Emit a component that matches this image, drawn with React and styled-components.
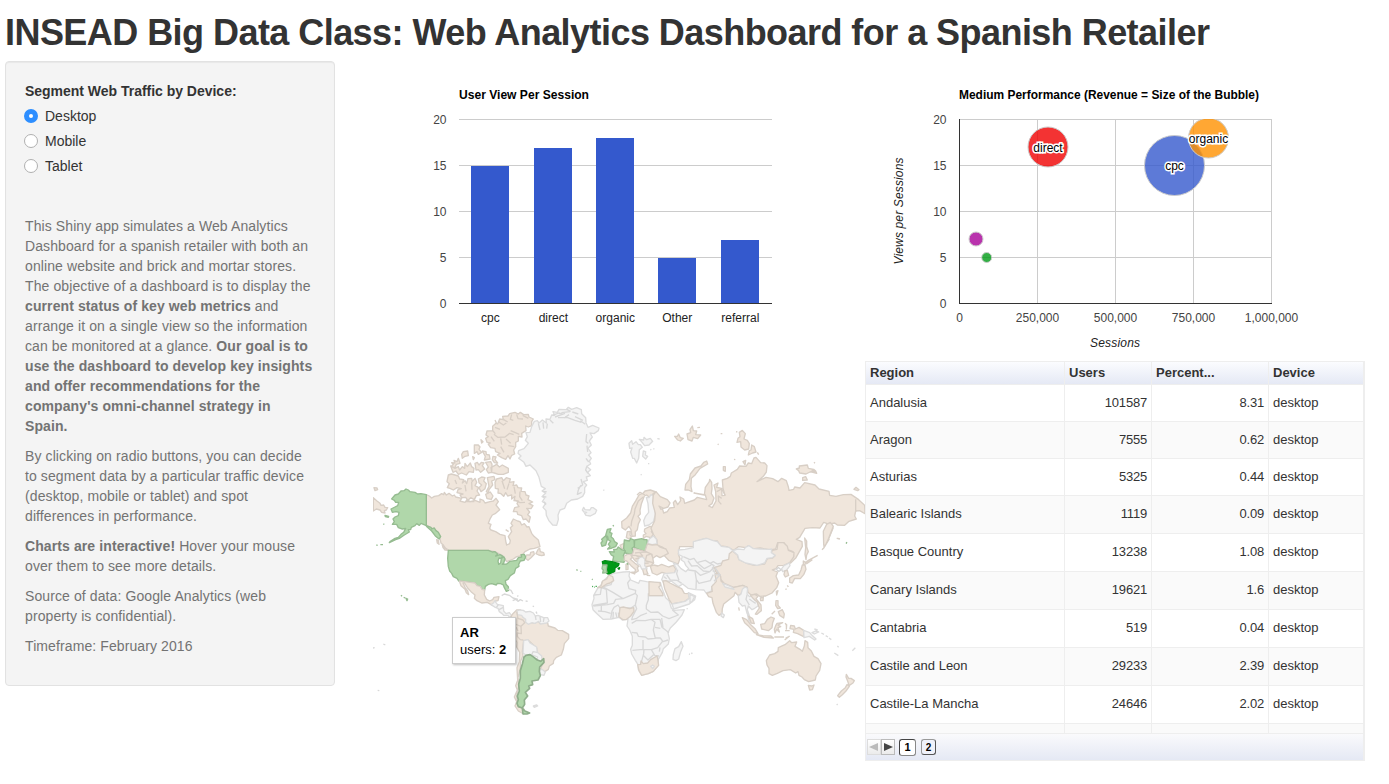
import React from "react";
import styled, { createGlobalStyle, css } from "styled-components";

const GlobalStyle = createGlobalStyle`
  * { box-sizing: border-box; }
  body {
    margin: 0;
    background: #fff;
    color: #333;
    font: 14px/20px "Liberation Sans", Arial, sans-serif;
    overflow: hidden;
  }
`;

const Page = styled.div`
  width: 1389px;
  height: 784px;
  padding: 0 5px;
`;

const Title = styled.h1`
  margin: 0;
  height: 61px;
  padding-top: 13px;
  font-size: 36px;
  line-height: 40px;
  font-weight: 700;
  letter-spacing: -0.55px;
  white-space: nowrap;
`;

const Body = styled.div`
  display: flex;
  align-items: flex-start;
`;

const Sidebar = styled.aside`
  width: 330px;
  height: 625px;
  padding: 19px;
  background: #f4f4f4;
  border: 1px solid #e2e2e2;
  border-radius: 4px;
  box-shadow: inset 0 1px 1px rgba(0, 0, 0, 0.05);
  white-space: nowrap;
`;

const GroupLabel = styled.div`
  font-weight: bold;
  height: 25px;
  letter-spacing: -0.02px;
`;

const RadioRow = styled.label`
  display: flex;
  align-items: center;
  gap: 7px;
  height: 20px;
  margin: 0 0 5px -1px;
`;

const Radio = styled.span`
  width: 14px;
  height: 14px;
  border-radius: 50%;
  border: 1px solid #b0b0b0;
  background: #fff;
  ${(p) =>
    p.$checked &&
    css`
      border: 5px solid #2d8eff;
    `}
`;

const Copy = styled.div`
  margin-top: 40px;
  color: #737373;
  letter-spacing: 0.1px;
`;

const Para = styled.p`
  margin: 0 0 10px;
`;

const Main = styled.main`
  display: grid;
  grid-template-columns: 500px 500px;
  grid-template-rows: 300px 400px;
  margin-left: 30px;
`;

const Chart = styled.svg`
  display: block;
  width: 500px;
  height: 300px;
  font-size: 12px;
  font-family: "Liberation Sans", Arial, sans-serif;
`;

const MapPanel = styled.div`
  position: relative;
  width: 500px;
  height: 400px;
`;

const MapSvg = styled.svg`
  display: block;
  width: 500px;
  height: 400px;
`;

const Tooltip = styled.div`
  position: absolute;
  left: 87px;
  top: 256px;
  width: 64px;
  height: 47px;
  padding: 6px 7px;
  background: #fff;
  border: 1px solid #ccc;
  box-shadow: 1px 1px 2px rgba(0, 0, 0, 0.25);
  color: #000;
  font-size: 13px;
  line-height: 17px;
  white-space: nowrap;
`;

const TablePanel = styled.section`
  width: 500px;
  height: 400px;
  border: 1px solid #eee;
  border-right-width: 2px;
  display: flex;
  flex-direction: column;
  font-size: 13px;
  overflow: hidden;
`;

const Row = styled.div`
  display: grid;
  grid-template-columns: 199px 87px 117px 1fr;
  flex: none;
  height: ${(p) => p.$h}px;
  background: ${(p) => (p.$odd ? "#fafafa" : "#fff")};
  ${(p) =>
    p.$head &&
    css`
      background: linear-gradient(#fbfcff, #e4e8f4);
      font-weight: bold;
    `}
`;

const Cell = styled.div`
  display: flex;
  align-items: center;
  justify-content: ${(p) => (p.$right ? "flex-end" : "flex-start")};
  letter-spacing: ${(p) => (p.$right ? "-0.2px" : "normal")};
  padding: 0 4px ${(p) => (p.$lift ? 2 : 0)}px;
  border-right: 1px solid #eee;
  border-bottom: 1px solid #eee;
  &:last-child { border-right: 0; }
`;

const Pager = styled.footer`
  flex: none;
  height: 27px;
  margin-top: auto;
  background: linear-gradient(#fafafc, #e4e8f4);
  display: flex;
  align-items: center;
  padding: 0 0 1px 1px;
`;

const Arrow = styled.span`
  width: 14px;
  height: 16px;
  border: 1px solid ${(p) => (p.$off ? "#ddd" : "#bbb")};
  background: linear-gradient(#fff, #ebebeb);
  display: flex;
  align-items: center;
  justify-content: center;
`;

const PageButton = styled.span`
  width: ${(p) => (p.$active ? 17 : 15)}px;
  height: ${(p) => (p.$active ? 17 : 16)}px;
  margin-left: ${(p) => (p.$active ? 4 : 5)}px;
  border: 1px solid #777;
  border-color: ${(p) => (p.$active ? "#444 #888 #888 #444" : "#999 #555 #555 #999")};
  border-radius: 3px;
  background: ${(p) => (p.$active ? "#fff" : "#f0f2fa")};
  color: #000;
  font-size: ${(p) => (p.$active ? 11 : 10)}px;
  font-weight: bold;
  line-height: 15px;
  text-align: center;
`;

const bars = [
  ["cpc", 15, 106, 105],
  ["direct", 17, 169, 87],
  ["organic", 18, 231, 77],
  ["Other", 5, 293, 197],
  ["referral", 7, 356, 179],
];
const ticks = [0, 5, 10, 15, 20];
const yOf = (v) => 242.5 - v * 9.2;

function BarChart() {
  return (
    <Chart viewBox="0 0 500 300">
      <text x="94" y="38" fontWeight="bold" textLength="130" lengthAdjust="spacingAndGlyphs">User View Per Session</text>
      {ticks.map((t) => (
        <g key={t}>
          <rect x="94" y={Math.floor(yOf(t))} width="313" height="1" fill="#ccc" />
          <text x="81.5" y={yOf(t) + 4.5} textAnchor="end" fill="#444">{t}</text>
        </g>
      ))}
      {bars.map(([name, v, x, top]) => (
        <g key={name}>
          <rect x={x} y={top} width="38" height={242 - top} fill="#3459cd" />
          <text x={x + 19.3} y="261" textAnchor="middle" fill="#222">{name}</text>
        </g>
      ))}
      <rect x="94" y="242" width="313" height="1" fill="#333" />
    </Chart>
  );
}

const bubbles = [
  ["cpc", 309.5, 104.5, 30, "#3459cd"],
  ["direct", 183, 86, 20, "#f00000"],
  ["organic", 343.5, 77, 20, "#ff9100"],
  ["", 111, 178, 7, "#a80099"],
  ["", 121.7, 196.5, 5, "#009b17"],
];

function BubbleChart() {
  return (
    <Chart viewBox="0 0 500 300">
      <defs>
        <clipPath id="plot"><rect x="94" y="58" width="313" height="185" /></clipPath>
      </defs>
      <text x="94" y="38" fontWeight="bold" textLength="300" lengthAdjust="spacingAndGlyphs">Medium Performance (Revenue = Size of the Bubble)</text>
      {ticks.map((t, i) => (
        <g key={t}>
          <rect x="94" y={Math.floor(yOf(t))} width="313" height="1" fill="#ccc" />
          <rect x={94 + i * 78} y="58" width="1" height="185" fill="#ccc" />
          <text x="81.5" y={yOf(t) + 4.5} textAnchor="end" fill="#444">{t}</text>
          <text x={94.5 + i * 78} y="261" textAnchor="middle" fill="#444">{(i * 250000).toLocaleString("en-US")}</text>
        </g>
      ))}
      <rect x="94" y="242" width="313" height="1" fill="#333" />
      <rect x="94" y="58" width="1" height="185" fill="#333" />
      <g clipPath="url(#plot)">
        {bubbles.map(([n, x, y, r, c]) => (
          <circle key={x} cx={x} cy={y} r={r} fill={c} fillOpacity=".8" stroke="#ccc" />
        ))}
      </g>
      {bubbles.map(([n, x, y]) => (
        <text key={x} x={x} y={y + 4.5} textAnchor="middle" stroke="#fff" strokeWidth="3" paintOrder="stroke">{n}</text>
      ))}
      <text x="250" y="286" textAnchor="middle" fontStyle="italic" fill="#222" textLength="50">Sessions</text>
      <text transform="translate(38 150) rotate(-90)" textAnchor="middle" fontStyle="italic" fill="#222" textLength="107">Views per Sessions</text>
    </Chart>
  );
}

const palette = {
  beige: ["#f0e6dc", "#d8cfc6"],
  grey: ["#f4f4f4", "#dcdcdc"],
  green: ["#b0d7aa", "#96bc91"],
  hover: ["#b0d7aa", "#8fae8b"],
  spain: ["#009a16", "#008a14"],
  line: ["none", "#d8d8d8"],
  tan: ["none", "#d8cfc6"],
  lake: ["#fff", "#d5d5d5"],
};

// Outlines are grouped by region; each group has its own origin, three units to a pixel.
const regions = [
  {
    at: [0, 34],
    shapes: [
      ["beige", "M184,299 193,303 200,309 208,304 221,302 230,296 236,299 238,292 244,300 252,295 262,303 268,300 272,306 290,310 285,318 300,322 306,314 315,320 330,316 345,322 345,312 355,316 360,324 375,320 385,318 393,310 400,320 393,330 404,344 392,355 382,360 376,370 370,385 378,388 374,400 378,405 392,410 405,418 420,422 422,438 425,450 434,446 436,437 430,425 440,410 436,398 443,392 438,385 445,372 458,378 465,380 470,390 478,386 486,396 492,395 500,415 507,424 520,435 525,455 508,460 495,462 480,470 470,482 455,485 445,492 425,500 415,485 410,480 390,470 370,466 250,466 240,458 235,450 228,444 225,432 215,412 200,400 184,390Z"],
      ["green", "M184,299 168,296 158,297 150,292 135,290 130,285 123,282 117,287 108,288 100,297 90,300 80,312 88,316 92,322 101,322 98,332 90,336 78,342 82,352 93,350 102,352 100,362 90,366 84,372 88,380 82,388 95,388 100,398 112,402 122,400 116,412 108,418 100,427 90,430 75,440 73,443 92,434 103,430 118,420 133,411 130,404 137,404 139,397 150,392 155,386 163,391 168,385 184,392 198,397 200,402 208,399 213,407 220,412 227,425 222,432 212,424 200,408 184,394Z"],
      ["green", "M60,361 71,364 70,367 61,365ZM55,387 58,388M46,449 54,449M34,450 38,451"],
      ["beige", "M25,308 36,318 45,325 48,331 56,330 60,337 68,338 64,345 58,347 60,354 50,352 45,345 34,342 25,348ZM27,278 36,279 38,284 30,287Z"],
      ["beige", "M480,488 485,480 495,480 497,472 506,470 508,478 498,488 489,496 484,492ZM513,476 520,462 524,460 526,470 536,473 538,480 530,482 521,480ZM215,434 220,436 222,448 217,444ZM232,450 240,459 251,466 240,465 234,458Z"],
      ["beige", "M390,262 395,252 410,248 415,257 424,248 436,252 433,262 447,260 444,272 455,270 459,278 470,279 468,289 480,290 483,300 492,303 489,314 503,321 492,326 504,332 498,341 485,340 494,351 488,359 496,366 492,382 483,372 475,374 470,362 458,358 456,350 445,350 449,338 462,335 456,326 460,318 447,317 450,304 440,312 440,300 428,303 422,293 416,304 408,296 399,294 400,282 391,280Z"],
      ["beige", "M250,240 259,237 270,240 280,243 284,252 296,254 292,264 300,257 305,266 309,251 320,250 322,259 330,250 335,262 330,272 341,278 336,288 344,300 334,302 328,314 317,308 309,316 302,307 290,308 285,300 294,297 276,293 279,284 289,281 276,278 265,285 255,280 247,278 253,266 246,260Z"],
      ["beige", "M340,252 350,246 360,248 356,258 364,266 360,281 348,290 342,278 350,270 342,263ZM367,248 387,244 390,254 380,258 383,270 372,284 370,294 364,290 372,274ZM362,298 376,291 384,303 379,313 366,311Z"],
      ["beige", "M383,94 393,85 398,87 404,72 415,74 413,64 429,63 434,56 450,52 460,57 466,52 476,59 490,58 492,66 505,72 500,80 500,92 490,96 482,93 483,107 470,115 471,126 460,124 460,138 452,142 452,155 446,165 449,177 440,181 435,192 429,182 422,193 410,188 397,180 405,175 392,170 390,160 377,158 370,148 376,144 366,142 362,130 370,125 363,120 366,108 383,107 390,115 383,106Z"],
      ["beige", "M378,218 395,208 403,216 412,210 430,220 430,232 415,238 400,238 388,234 380,232ZM328,150 340,150 345,156 342,163 350,172 340,178 336,170 328,175ZM352,168 363,170 364,178 373,180 375,192 358,195 361,184ZM258,215 265,208 260,203 270,204 267,196 276,200 280,190 285,205 274,208 270,218ZM290,178 295,170 308,168 310,182 300,184 292,190ZM257,213 270,220 280,215 284,225 292,215 299,220 300,205 307,215 316,204 320,215 327,220 325,232 312,230 304,240 290,234 280,238 273,228 264,232ZM330,205 337,202 342,210 349,202 357,204 352,212 359,222 347,232 340,224 333,225ZM348,134 354,140 350,144ZM362,202 377,200 381,208 380,232 370,234 364,224 370,216ZM323,185 328,188 325,194ZM384,184 393,186 390,194 398,204 388,203 382,194Z"],
      ["tan", "M390,97 405,103M400,80 415,90 424,84M415,73 428,81M440,58 436,73 445,76M455,58 459,71 474,72M473,61 490,70M387,118 398,127 420,126 434,115 446,119M437,107 463,118M423,132 437,145M430,152 448,155M407,130 410,149M378,125 388,139M407,155 417,172M390,75 395,86M411,257 419,281M432,265 426,284M447,275 451,296M465,290 464,305 472,317M450,315 465,323 480,322M270,255 275,267M300,270 303,289M320,260 321,284M302,320 328,320M431,410 422,404"],
    ],
  },
  {
    at: [0, 194],
    shapes: [
      ["green", "M250,-14 370,-14 382,-9 390,-10 398,-3 392,3 405,-1 414,4 408,10 402,9 399,18 401,28 407,24 409,10 417,6 420,12 416,24 412,28 425,27 435,19 455,16 460,8 470,6 468,-1 478,-2 482,6 477,16 466,18 461,28 462,34 452,40 448,54 436,62 429,73 421,77 423,88 430,95 431,106 424,109 418,98 415,90 407,86 397,85 394,90 380,86 370,88 361,94 359,105 351,103 346,94 336,92 330,84 300,80 281,78 276,70 265,65 260,55 254,48 250,35 248,10Z"],
      ["beige", "M283,78 300,80 330,84 336,92 346,94 351,103 359,105 358,120 365,133 374,138 383,134 387,127 402,125 399,137 391,138 388,145 380,150 367,142 350,144 336,137 328,130 330,120 318,110 308,99 298,83 294,84 300,97 308,108 311,119 304,113 300,103 288,92Z"],
      ["grey", "M378,149 386,143 390,137 393,143 397,148 415,152 416,168 423,176 433,173 440,182 435,188 429,181 416,181 410,175 403,170 399,160 391,157Z"],
      ["line", "M400,149 394,158M415,157 402,164M410,122 418,117 433,121 444,129 459,133M443,137 452,133 459,139 466,134 474,138M482,138 488,139M429,102 438,106 444,117M457,122 460,124M503,153 507,155M513,170 516,176M20,280 29,278M55,267 61,270M38,406 43,407M2,282 3,283"],
      ["green", "M108,121 111,124M116,127 121,129M123,130 128,132 126,137Z"],
      ["beige", "M438,184 443,177 455,165 466,165 471,169 474,185 482,193 492,194 488,205 502,203 510,205 518,196 525,206 540,196 548,204 550,213 570,219 578,226 592,227 611,238 611,251 598,266 595,283 589,300 574,307 566,317 565,325 553,333 550,343 538,351 527,341 535,321 527,314 528,303 517,294 515,279 489,255 476,257 472,290 474,302 467,318 466,339 459,368 462,390 455,424 458,443 464,456 477,462 476,477 460,468 450,453 455,440 448,426 457,405 452,392 458,376 456,338 463,320 464,292 455,276 456,262 440,239 436,227 445,216 441,204 447,197Z"],
      ["grey", "M456,168 464,165 475,166 482,171 495,169 505,174 511,183 519,181 536,188 548,188 552,198 545,204 527,207 521,199 510,205 501,203 490,208 482,202 482,193 474,187 470,181 457,179Z"],
      ["line", "M511,183 513,195M525,185 527,201M537,189 535,201"],
      ["grey", "M476,257 489,254 495,264 515,276 517,292 530,303 531,315 526,320 515,314 518,306 505,301 495,299 483,301 474,294Z"],
      ["line", "M500,299 504,290 517,292"],
      ["tan", "M455,170 459,190 474,195 479,203 468,214 458,210 445,205M468,214 469,236 457,234 457,244 466,254 475,255M439,216 454,218 459,228"],
      ["grey", "M524,344 531,343 541,351 537,361 525,358ZM505,453 515,450 518,453 508,457Z"],
      ["hover", "M477,306 483,301 495,299 504,305 517,315 527,319 536,311 537,322 524,336 523,350 526,362 519,375 501,378 503,389 491,393 494,400 481,412 488,423 478,435 479,448 472,459 460,455 456,445 460,434 457,423 463,408 461,388 466,370 466,347 472,327Z"],
      ["hover", "M472,460 480,468 494,474 486,477 474,477Z"],
    ],
  },
  {
    at: [165, 34],
    shapes: [
      ["grey", "M5,95 13,79 22,77 27,84 37,75 49,84 48,72 60,73 65,60 74,61 69,50 82,52 87,43 108,44 115,37 125,43 140,38 154,44 155,56 167,68 168,83 174,97 188,91 207,99 205,107 192,116 180,114 187,126 178,138 184,150 174,160 183,173 176,180 184,190 178,198 182,207 170,214 182,224 173,232 181,242 169,246 172,256 160,260 170,270 164,278 164,293 158,304 143,312 124,315 110,325 104,340 90,345 84,360 85,374 80,391 68,390 56,376 49,361 48,347 39,337 47,325 37,320 44,309 36,305 47,294 36,288 46,281 34,274 27,247 18,227 0,210 -12,214 -18,202 -34,190 -27,183 -36,175 -34,167 -18,161 -5,145 -14,136 -8,125 -12,113 0,112Z"],
      ["line", "M25,85 30,105M39,82 41,101M52,86 50,101M60,75 70,85M68,61 86,54 100,58M75,66 105,55M94,53 120,50M117,59 103,69M127,51 145,57M105,65 135,76 154,82M84,68 115,68M135,65 159,76M110,43 122,49M151,77 166,88M38,290 50,290M39,305 49,306M42,320 48,329M153,252 158,270 143,280M153,270 145,285 142,298 155,292M170,117 168,140 175,145M171,152 173,171M168,190 176,201M170,215 167,225 174,235"],
      ["grey", "M157,345 161,337 165,344 180,345 184,338 190,338 200,346 196,355 181,363 168,361 164,355 170,352 162,351Z"],
      ["grey", "M297,145 305,137 308,148 318,140 325,149 331,149 337,157 328,164 326,190 320,204 313,190 308,190 302,171 306,159 299,160ZM328,133 341,135 342,127 350,134 361,130 368,139 357,150 344,152 337,143ZM340,168 347,170 346,180 353,184 347,192 338,184ZM382,131 389,132M361,163 364,165M370,161 373,162M354,206 358,206M332,238 335,240M220,285 223,286"],
      ["green", "M232,403 243,401 239,412 246,415 243,425 250,431 254,440 262,445 257,455 246,459 233,462 240,454 235,448 242,438 235,435 233,425 227,421ZM227,422 232,432 227,450 216,454 213,444 218,438 215,433ZM249,390 251,394"],
      ["beige", "M275,380 290,369 302,354 307,334 318,316 327,300 340,294 345,288 361,285 378,291 370,295 365,302 357,306 350,300 343,303 334,327 330,346 331,357 324,364 331,374 325,387 322,404 316,410 316,423 306,424 303,404 297,394 286,405 276,398Z"],
      ["tan", "M303,394 305,379 313,356 315,342 325,318 340,306M321,300 330,292 345,300"],
      ["grey", "M349,307 357,308 363,299 370,303 369,322 374,336 376,359 370,380 357,390 344,393 341,377 346,365 356,352 354,326Z"],
      ["beige", "M292,410 301,409 300,420 305,425 297,432 289,427ZM270,451 282,445 283,458 275,462ZM344,402 360,394 369,396 364,410 370,418 362,428 348,424 340,431 340,420 348,416 343,410Z"],
      ["green", "M283,435 298,438 302,431 312,435 314,454 306,460 310,471 304,478 286,474 281,460Z"],
      ["green", "M314,435 335,431 342,434 351,434 352,446 347,466 336,467 313,458Z"],
      ["green", "M238,470 253,471 251,463 260,463 265,456 275,464 286,468 280,482 285,494 282,502 263,500 248,498 251,484 244,480Z"],
      ["beige", "M370,300 378,290 391,305 412,314 420,324 414,336 401,340 387,333 393,343 397,340 401,354 412,350 419,339 433,337 430,323 436,316 443,329 452,317 450,306 461,312 464,325 493,315 502,307 530,314 526,300 492,294 523,300 526,277 538,260 539,253 545,262 546,281 544,296 552,309 546,326 536,333 547,338 558,318 557,290 552,270 564,264 560,277 575,280 576,302 585,301 579,280 577,255 592,250 601,244 604,234 622,223 629,213 648,214 655,204 665,206 672,189 678,187 692,203 704,204 711,212 709,231 700,244 681,260 708,247 728,251 744,260 755,250 769,257 775,275 777,286 791,283 794,276 810,279 824,263 855,270 867,282 897,289 899,301 918,304 940,299 963,298 986,314 1004,331 1005,356 989,347 977,348 974,363 979,372 957,379 944,391 922,390 914,384 904,386 909,400 898,427 882,455 882,430 892,386 881,382 870,399 847,398 825,400 809,427 799,433 816,440 817,454 798,488 782,504 774,502 791,484 789,470 773,464 762,443 743,443 737,462 722,465 690,459 658,463 655,452 648,458 625,455 611,466 590,455 572,453 562,438 543,437 528,430 495,440 493,455 449,455 445,477 450,491 444,507 416,496 400,479 409,469 397,456 382,450 381,435 370,418 363,400 374,377 376,355 368,325Z"],
      ["grey", "M357,433 370,423 379,432 381,446 367,449 353,446Z"],
      ["beige", "M352,447 367,450 382,449 390,456 408,462 415,475 402,482 390,488 379,482 369,490 364,477 345,468ZM312,460 336,467 347,470 366,478 371,504 350,510 333,500 320,488 304,481 309,473Z"],
      ["beige", "M465,285 467,268 478,254 481,237 495,219 513,213 521,202 530,198 533,207 510,220 496,239 484,250 483,275 486,290 475,285ZM434,124 442,124 446,117 451,128 460,130 451,138 443,135ZM471,117 482,113 480,104 487,93 490,107 500,108 497,119 512,120 503,131 490,127 486,138 474,134ZM502,98 510,97M572,116 577,116M563,147 566,149M580,215 586,215 586,229 580,226Z"],
      ["beige", "M618,110 622,111M621,142 624,130 630,125 628,112 637,106 646,116 642,132 652,136 658,146 656,162 644,165 633,156 632,140ZM655,180 658,167 663,165 665,150 673,155 678,171 668,174ZM682,172 686,179M799,222 808,219 808,213 832,210 835,220 851,223 857,228 840,231 828,237 809,234 806,227ZM847,224 858,230 860,235 846,231ZM818,248 827,245 832,255 818,256ZM852,202 855,205M972,283 978,277 987,284 983,287ZM612,193 616,194M639,200 647,196 645,210Z"],
      ["tan", "M560,290 575,282 585,300M575,310 565,303 566,319 574,328M977,313 977,350M922,430 930,432"],
      ["green", "M948,443 951,445"],
    ],
  },
  {
    at: [165, 174],
    shapes: [
      ["beige", "M283,63 292,58 305,58 307,67 301,73 315,85 327,94 322,97 325,108 313,115 317,104 303,92 290,78 283,76ZM288,88 294,87 294,103 288,104ZM302,112 315,111 314,117Z"],
      ["beige", "M303,61 317,61 328,65 348,78 370,83 364,92 350,95 350,107 354,117 342,119 338,104 330,86 315,77 309,69Z"],
      ["grey", "M325,69 337,65 345,73 344,91 350,101 335,102 330,90 322,86Z"],
      ["tan", "M315,54 329,52 338,63 320,64M329,52 350,51M346,78 350,61 362,57M316,72 328,69M344,85 356,84M350,121 361,122"],
      ["beige", "M361,94 371,90 384,93 395,88 416,96 430,91 437,102 434,115 408,116 396,112 381,120 367,114Z"],
      ["spain", "M217,80 225,77 246,80 267,86 265,92 255,99 254,109 246,117 237,119 229,113 231,90 219,89ZM264,100 269,98 267,103ZM187,154 189,155M193,156 194,157M197,154 200,154"],
      ["green", "M218,90 231,90 229,104 231,113 218,114 220,105 216,101ZM139,104 143,106M151,109 154,109M186,132 188,134M291,84 294,89"],
      ["grey", "M237,122 250,115 280,111 299,110 297,123 302,135 326,145 330,136 350,140 373,143 391,142 398,164 407,188 417,197 424,219 432,226 463,224 456,240 439,261 421,279 414,293 418,310 415,327 400,341 397,352 385,373 384,391 370,409 355,416 335,420 325,404 324,389 316,376 305,357 302,343 307,331 307,304 299,285 291,273 294,252 277,255 267,247 244,252 219,253 201,236 189,224 186,209 192,190 191,181 203,160 213,152 216,141Z"],
      ["line", "M192,180 211,178 214,158 229,163M214,158 222,157 250,173 279,191 316,175 317,166 297,161 293,144 300,134M248,134 243,149 215,156M229,163 232,204 189,211M190,213 232,209 251,205 257,193 279,191M316,175 322,182 316,210 303,219 270,219 264,210 252,217 246,228 242,251M355,175 355,194 349,211 349,222 362,232 384,231 398,243 417,251 445,240 427,225M357,181 399,182M316,210 320,221 308,244 305,254 320,250 331,242 351,234M305,265 320,256 346,257 363,253 375,262 370,285 376,310 354,312 346,306 325,304 321,294 305,292M363,253 390,253 396,277 417,293M395,249 399,278M375,277 391,280M414,315 399,320 391,309 374,309M307,346 339,343 339,315M339,343 364,344 383,338 397,320M342,343 341,356 332,389M341,362 354,375 373,357M364,344 374,361 387,363M390,337 388,350M204,228 225,230 242,235M214,212 214,228M250,230 249,252M257,232 261,248M265,233 267,246"],
      ["beige", "M236,120 248,125 251,137 240,144 230,147 214,158 203,158 213,152 218,138 230,132ZM357,140 390,143 391,152 386,156 398,175 399,182 357,182ZM270,218 280,216 299,221 311,218 312,229 302,243 288,254 279,254 267,245Z"],
      ["beige", "M323,389 332,388 333,378 340,386 353,384 362,374 381,363 383,370 386,391 370,409 355,416 335,421 327,407Z"],
      ["grey", "M362,394 368,390 373,394 368,401ZM454,320 459,334 452,350 446,372 438,377 429,373 430,358 435,341 446,335ZM477,357 480,358M484,354 487,355"],
      ["grey", "M445,45 465,43 490,38 490,20 520,12 531,10 550,17 562,20 574,34 597,37 610,48 605,60 590,80 573,93 547,99 555,115 573,127 562,144 548,151 543,169 528,174 522,165 497,164 474,160 458,147 446,155 425,139 412,138 406,151 395,134 402,116 434,113 440,102 430,84 442,88 453,101 467,110 476,101 467,91 463,81 454,75 457,64 446,59Z"],
      ["line", "M460,65 480,74 492,70 501,83 526,76 552,92 548,99M474,77 485,93 502,92 520,108 539,110 551,98M475,105 497,108 511,121 540,110M495,110 499,134 507,145 541,137 550,119M499,134 498,162M410,119 421,135 442,136 455,145M443,104 440,116 447,136M402,125 410,131M500,82 523,101 544,90M540,85 550,80 562,87 587,82M548,108 564,110 571,106"],
      ["beige", "M399,138 408,137 420,144 441,155 455,161 463,175 477,176 478,190 461,201 442,204 426,207 417,193 411,178 404,161Z"],
      ["grey", "M426,207 442,204 465,199 478,190 475,173 497,183 494,194 478,207 450,216 431,222ZM470,220 473,222"],
    ],
  },
  {
    at: [325, 174],
    shapes: [
      ["beige", "M73,98 93,91 98,78 116,73 118,56 128,48 142,60 147,74 168,84 193,91 224,87 232,71 248,69 255,62 243,55 247,46 261,43 264,23 281,23 292,34 295,46 312,53 311,66 299,83 281,91 264,92 258,101 247,105 263,111 258,124 266,143 260,158 246,174 227,183 209,184 200,177 183,180 174,172 171,157 158,151 131,157 103,145 91,132 91,120 78,111ZM211,189 220,186 219,197 212,197ZM259,169 264,167 260,180Z"],
      ["grey", "M128,47 143,42 162,44 166,37 177,32 190,41 211,42 236,43 245,42 244,53 256,61 247,68 231,70 224,84 201,91 167,84 147,74 143,60Z"],
      ["beige", "M50,175 67,169 65,155 79,139 75,119 82,112 92,124 93,138 107,151 128,158 146,154 158,151 172,157 159,166 153,177 144,181 135,172 132,182 119,193 101,207 97,221 96,235 87,241 79,232 69,205 66,188 56,185Z"],
      ["grey", "M98,145 125,156 132,163 105,156ZM95,234 103,240 100,248 93,243ZM153,177 157,163 165,156 173,160 171,177 179,185 187,182 194,195 202,199 205,212 194,220 186,224 175,213 172,224 178,242 171,235 165,211 157,213 147,202 145,184ZM172,236 180,248 187,252 182,262 176,255ZM275,101 282,92 298,84 300,92 290,105 278,110ZM0,178 14,185 6,200 0,203Z"],
      ["line", "M171,180 168,193 178,210M178,192 186,198 197,205M72,139 90,120 75,98M75,119 92,120"],
      ["beige", "M182,181 195,178 204,184 198,191 213,210 214,227 201,238 196,237 208,219 202,202 189,190ZM284,108 292,106 296,121 286,126 282,119ZM146,217 148,227M176,244 188,251 193,266 184,264Z"],
      ["beige", "M344,9 350,18 350,35 355,50 350,60 348,74 345,58 347,38ZM340,78 347,82 363,72 366,75 350,86 340,88ZM299,129 310,122 326,120 333,105 337,90 345,90 348,103 341,119 331,131 314,130 307,144 299,142ZM400,-11 410,-32 421,-38 430,-26 416,10 405,34 401,28ZM345,85 355,76 383,61M396,44 402,38 418,12M286,163 290,162M292,151 295,156M440,10 448,11"],
      ["green", "M468,22 471,24"],
      ["beige", "M157,248 170,254 183,270 195,281 204,296 193,293 174,272 164,263ZM199,299 218,302 243,303 250,309 222,307ZM212,268 224,266 232,253 243,246 253,250 248,263 246,278 235,287 215,282ZM257,272 261,265 278,263 264,270 272,275 264,278 268,291 260,283 255,294 253,283ZM258,197 264,197 264,211 271,219 263,221 257,211ZM265,230 277,224 283,237 281,249 269,241ZM245,238 255,228M285,265 290,269 289,284M285,287 299,287M253,306 282,306M287,309 298,304 284,315M302,271 313,273 316,282 327,277 341,286 341,305 323,296 310,292 312,283 300,281Z"],
      ["grey", "M341,286 359,293 366,301 378,312 374,315 358,304 342,308ZM366,293 377,288 386,291 373,297ZM373,282 383,285M394,294 402,298M407,302 414,306M417,309 424,314M442,333 446,337M433,354 445,362M487,347 496,338M4,355 7,356M440,510 443,507"],
      ["beige", "M229,377 239,360 254,356 264,349 265,338 278,332 285,329 299,317 305,323 320,321 315,334 330,343 337,349 343,333 345,317 353,322 354,338 364,348 372,364 384,371 393,386 389,406 378,423 376,435 356,440 343,434 336,426 327,421 324,410 317,414 301,404 279,407 262,415 247,421 237,416 237,400 231,390ZM355,451 365,453 372,450 367,464 359,465ZM469,418 476,430 483,430 493,437 489,444 477,452 474,441 468,426ZM471,449 478,454 468,468 457,479 448,487 443,482 454,468 466,458Z"],
      ["lake", "M258,102 266,98 274,105 266,109Z"],
    ],
  },
];

function WorldMap() {
  return (
    <MapSvg viewBox="0 0 500 400">
      <defs>
        <clipPath id="mapArea"><rect x="8" y="0" width="492" height="400" /></clipPath>
      </defs>
      <g clipPath="url(#mapArea)" strokeLinejoin="round">
        {regions.map((r, i) => (
          <g key={i} transform={`translate(${r.at[0]} ${r.at[1]}) scale(.33333)`}>
            {r.shapes.map(([tone, d], j) => (
              <path key={j} d={d} fill={palette[tone][0]} stroke={palette[tone][1]} strokeWidth={tone === "hover" ? 5 : 4} />
            ))}
          </g>
        ))}
      </g>
    </MapSvg>
  );
}

const rows = [
  ["Andalusia", "101587", "8.31"],
  ["Aragon", "7555", "0.62"],
  ["Asturias", "5325", "0.44"],
  ["Balearic Islands", "1119", "0.09"],
  ["Basque Country", "13238", "1.08"],
  ["Canary Islands", "19621", "1.6"],
  ["Cantabria", "519", "0.04"],
  ["Castile and Leon", "29233", "2.39"],
  ["Castile-La Mancha", "24646", "2.02"],
];

function RegionTable() {
  return (
    <TablePanel>
      <Row $head $h={23}>
        {["Region", "Users", "Percent...", "Device"].map((h) => <Cell key={h}>{h}</Cell>)}
      </Row>
      {rows.map(([name, users, pct], i) => (
        <Row key={name} $odd={i % 2} $h={i < 3 ? 37 : 38}>
          <Cell $lift={i > 2}>{name}</Cell>
          <Cell $right $lift={i > 2}>{users}</Cell>
          <Cell $right $lift={i > 2}>{pct}</Cell>
          <Cell $lift={i > 2}>desktop</Cell>
        </Row>
      ))}
      <Row $odd $h={10}><Cell /><Cell /><Cell /><Cell /></Row>
      <Pager>
        <Arrow $off><svg width="10" height="10"><path d="M9 1V9L0 5Z" fill="#bbb" /></svg></Arrow>
        <Arrow><svg width="10" height="10"><path d="M1 1V9L10 5Z" fill="#444" /></svg></Arrow>
        <PageButton $active>1</PageButton>
        <PageButton>2</PageButton>
      </Pager>
    </TablePanel>
  );
}

export default function App() {
  return (
    <Page>
      <GlobalStyle />
      <Title>INSEAD Big Data Class: Web Analytics Dashboard for a Spanish Retailer</Title>
      <Body>
        <Sidebar>
          <GroupLabel>Segment Web Traffic by Device:</GroupLabel>
          <RadioRow><Radio $checked />Desktop</RadioRow>
          <RadioRow><Radio />Mobile</RadioRow>
          <RadioRow><Radio />Tablet</RadioRow>
          <Copy>
            <Para>
              This Shiny app simulates a Web Analytics<br />
              Dashboard for a spanish retailer with both an<br />
              online website and brick and mortar stores.<br />
              The objective of a dashboard is to display the<br />
              <b>current status of key web metrics</b> and<br />
              arrange it on a single view so the information<br />
              can be monitored at a glance. <b>Our goal is to<br />
              use the dashboard to develop key insights<br />
              and offer recommendations for the<br />
              company's omni-channel strategy in<br />
              Spain.</b>
            </Para>
            <Para>
              By clicking on radio buttons, you can decide<br />
              to segment data by a particular traffic device<br />
              (desktop, mobile or tablet) and spot<br />
              differences in performance.
            </Para>
            <Para>
              <b>Charts are interactive!</b> Hover your mouse<br />
              over them to see more details.
            </Para>
            <Para>
              Source of data: Google Analytics (web<br />
              property is confidential).
            </Para>
            <Para>Timeframe: February 2016</Para>
          </Copy>
        </Sidebar>
        <Main>
          <BarChart />
          <BubbleChart />
          <MapPanel>
            <WorldMap />
            <Tooltip><b>AR</b><br />users: <b>2</b></Tooltip>
          </MapPanel>
          <RegionTable />
        </Main>
      </Body>
    </Page>
  );
}
